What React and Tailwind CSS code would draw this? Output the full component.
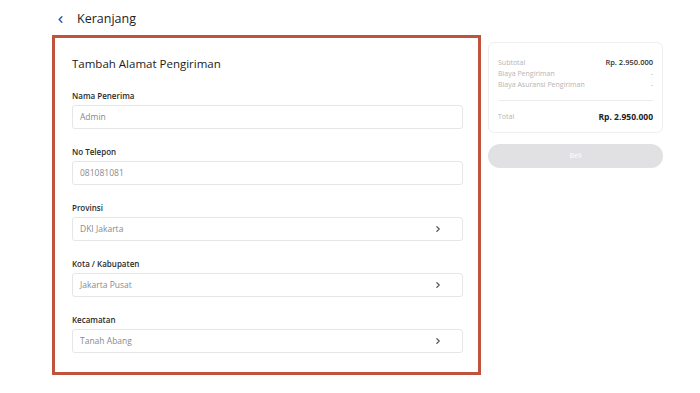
import React from 'react';

const fields = [
  { label: 'Nama Penerima', value: 'Admin' },
  { label: 'No Telepon', value: '081081081' },
  { label: 'Provinsi', value: 'DKI Jakarta', select: true },
  { label: 'Kota / Kabupaten', value: 'Jakarta Pusat', select: true },
  { label: 'Kecamatan', value: 'Tanah Abang', select: true },
];

const Chevron = ({ className }) => (
  <svg viewBox="0 0 10 10" className={className} fill="none" stroke="currentColor" strokeWidth="1.6" strokeLinecap="round" strokeLinejoin="round">
    <path d="M3.5 2l3 3-3 3" />
  </svg>
);

const Field = ({ label, value, select }) => (
  <div className="flex flex-col">
    <span className="text-[8px] font-semibold text-[#2b2b2b] leading-[10px] mt-[1px]">{label}</span>
    <div className="mt-[4px] h-[24px] w-[391px] rounded-[3px] border border-[#e6e6e6] bg-white flex items-center justify-between pl-[7px] pr-[20px]">
      <span className="text-[8.5px] text-[#8a8a8a]">{value}</span>
      {select && <Chevron className="w-[8px] h-[8px] text-[#555]" />}
    </div>
  </div>
);

const Row = ({ left, right, strong }) => (
  <div className="flex justify-between items-center leading-[11px]">
    <span className="text-[7px] text-[#b5b5b5]">{left}</span>
    <span className={strong ? 'text-[7.5px] font-semibold text-[#333]' : 'text-[7px] text-[#b5b5b5]'}>{right}</span>
  </div>
);

export default function App() {
  return (
    <div className="w-[700px] h-[393px] bg-white overflow-hidden" style={{ fontFamily: '"Open Sans", "Noto Sans", sans-serif' }}>
      <div className="h-[35px] flex items-center pl-[56px] pt-[3px]">
        <Chevron className="w-[9px] h-[9px] text-[#1c5cb8] -scale-x-100" />
        <span className="ml-[12px] text-[12.5px] text-[#222]">Keranjang</span>
      </div>

      <div className="flex items-start pl-[52px] gap-[7px]">
        <div className="w-[429px] h-[340px] border-[3px] border-[#c0533d] bg-white pl-[17px] pt-[18px]">
          <h2 className="text-[11.5px] font-medium text-[#1a1a1a] leading-[16px]">Tambah Alamat Pengiriman</h2>
          <div className="mt-[18px] flex flex-col gap-[17px]">
            {fields.map((f) => (
              <Field key={f.label} {...f} />
            ))}
          </div>
        </div>

        <div className="mt-[7px] w-[175px] flex flex-col">
          <div className="rounded-[6px] border border-[#efefef] bg-white px-[9px] pt-[14px] pb-[8px]">
            <Row left="Subtotal" right="Rp. 2.950.000" strong />
            <Row left="Biaya Pengiriman" right="-" />
            <Row left="Biaya Asuransi Pengiriman" right="-" />
            <div className="mt-[10px] border-t border-[#ececec]" />
            <div className="mt-[10px] flex justify-between items-center">
              <span className="text-[7px] text-[#b5b5b5]">Total</span>
              <span className="text-[8.5px] font-bold text-[#222]">Rp. 2.950.000</span>
            </div>
          </div>
          <button className="mt-[11px] h-[24px] rounded-full bg-[#e1e1e4] text-[7px] text-white">Beli</button>
        </div>
      </div>
    </div>
  );
}
